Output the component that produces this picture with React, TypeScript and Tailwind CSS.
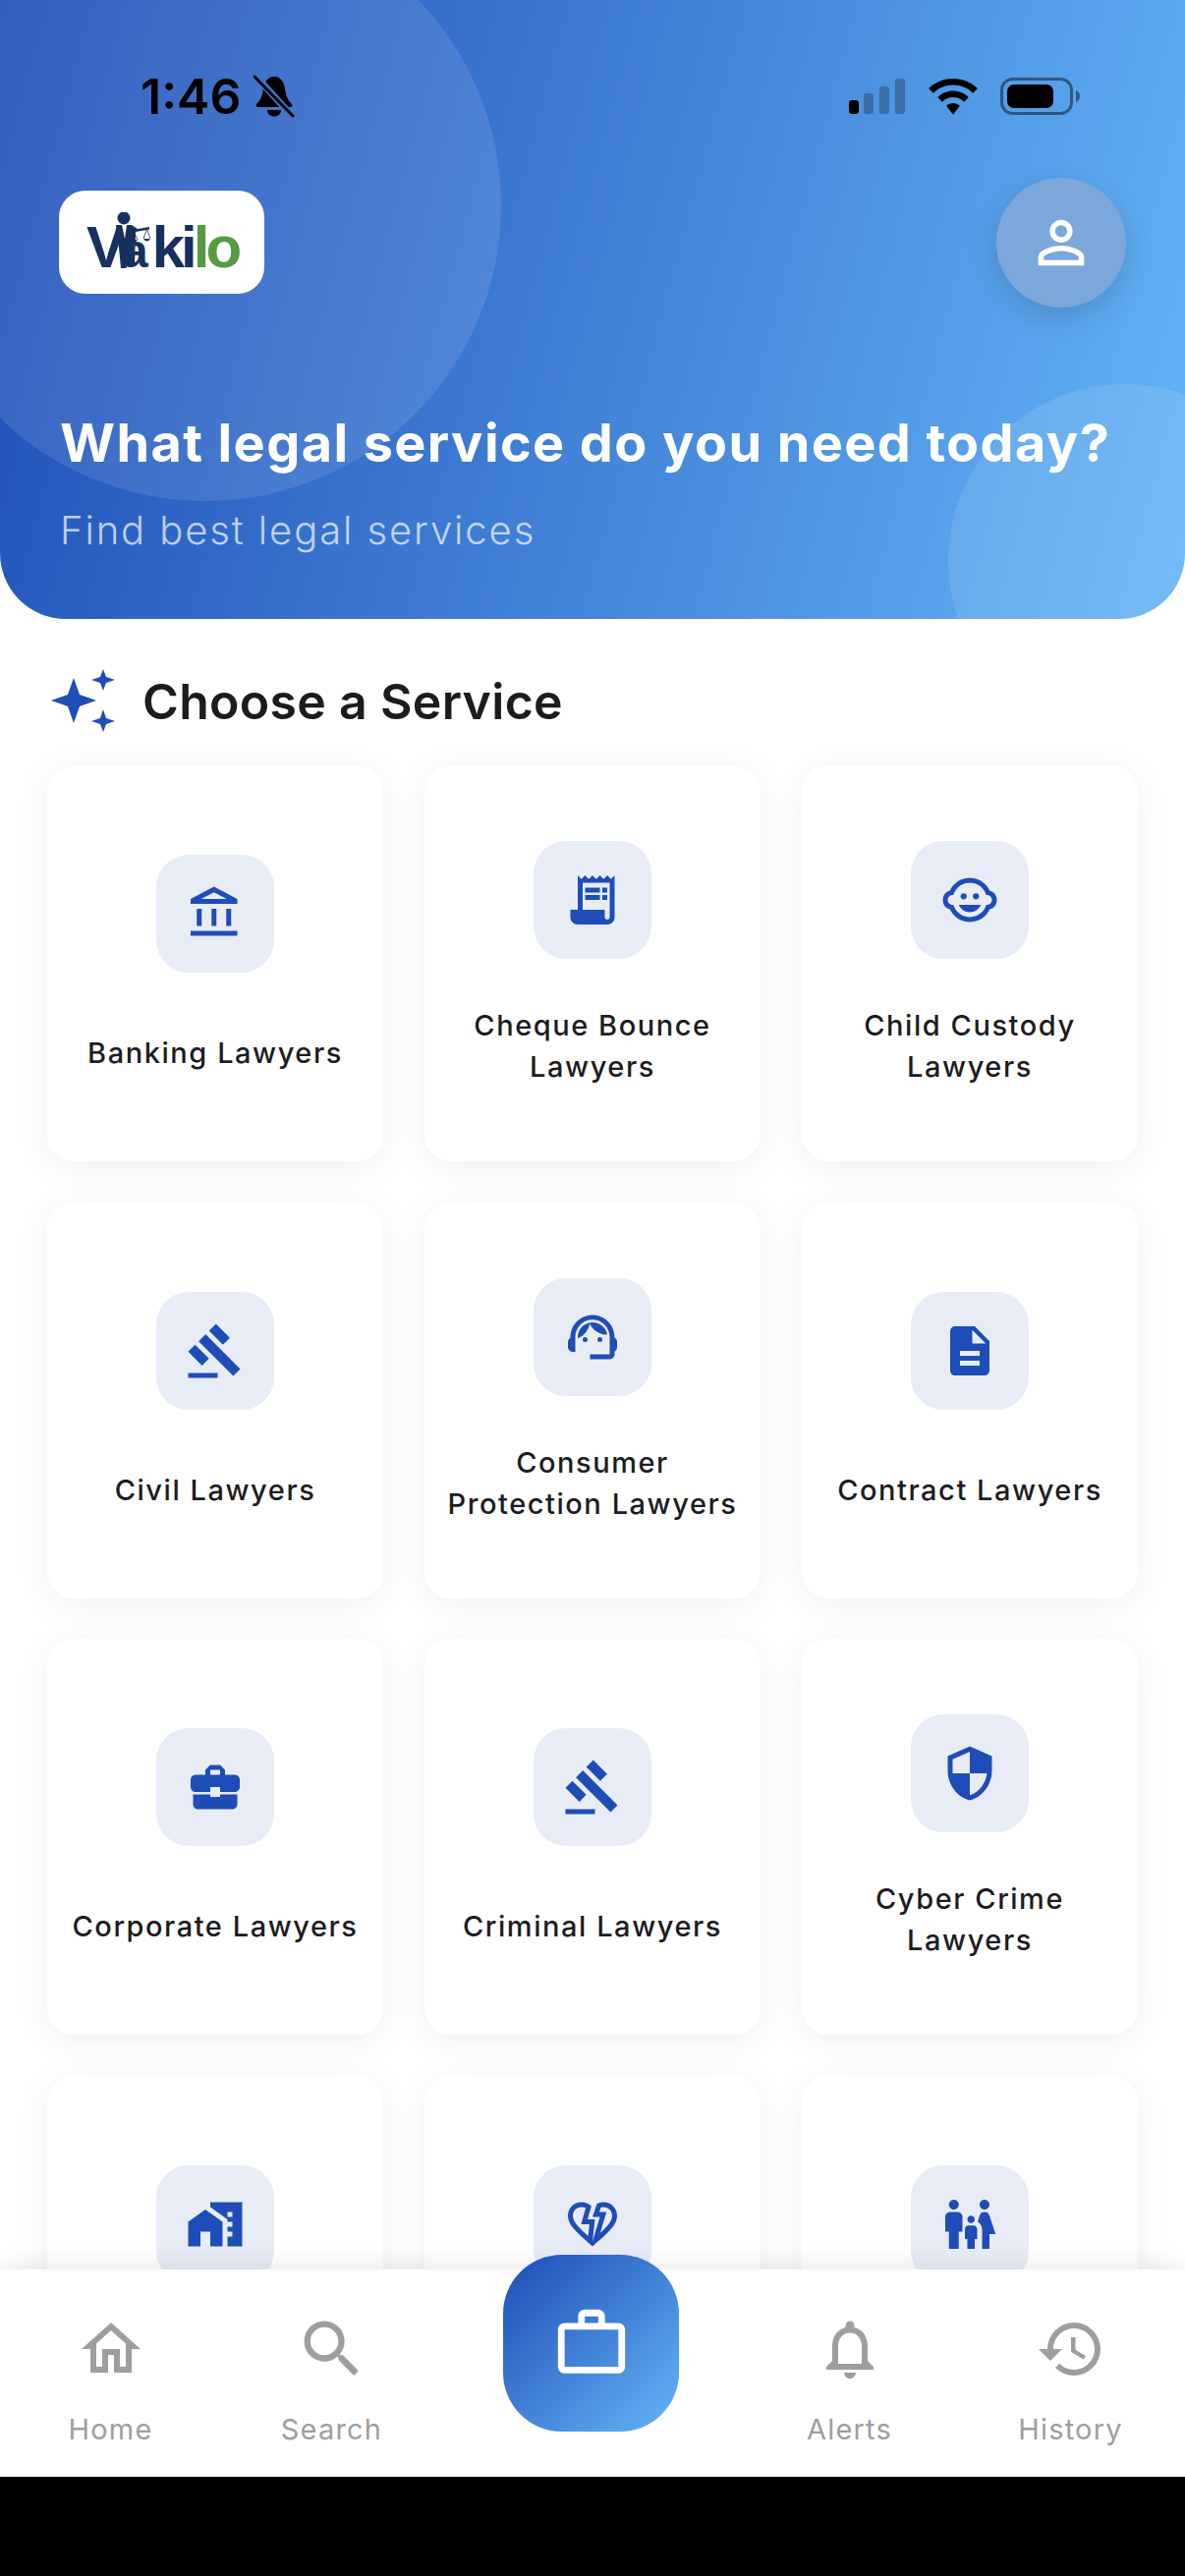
import React from 'react';
import type { IconType } from 'react-icons';
import {
  MdBusinessCenter,
  MdDescription,
  MdFamilyRestroom,
  MdGavel,
  MdHistory,
  MdHomeWork,
  MdOutlineAccountBalance,
  MdOutlineChildCare,
  MdOutlineHeartBroken,
  MdOutlineHome,
  MdOutlineNotifications,
  MdOutlineSupportAgent,
  MdPersonOutline,
  MdReceiptLong,
  MdSearch,
  MdSecurity,
  MdWorkOutline,
} from 'react-icons/md';

interface Service {
  label?: string;
  icon: IconType;
  twoLines?: boolean;
}

// last row sits behind the nav, its labels never show
const services: Service[] = [
  { label: 'Banking Lawyers', icon: MdOutlineAccountBalance },
  { label: 'Cheque Bounce Lawyers', icon: MdReceiptLong, twoLines: true },
  { label: 'Child Custody Lawyers', icon: MdOutlineChildCare, twoLines: true },
  { label: 'Civil Lawyers', icon: MdGavel },
  { label: 'Consumer Protection Lawyers', icon: MdOutlineSupportAgent, twoLines: true },
  { label: 'Contract Lawyers', icon: MdDescription },
  { label: 'Corporate Lawyers', icon: MdBusinessCenter },
  { label: 'Criminal Lawyers', icon: MdGavel },
  { label: 'Cyber Crime Lawyers', icon: MdSecurity, twoLines: true },
  { icon: MdHomeWork },
  { icon: MdOutlineHeartBroken },
  { icon: MdFamilyRestroom },
];

function BellOff() {
  return (
    <svg width="42" height="44" viewBox="0 0 42 44" className="ml-[13px]">
      <path d="M21 2C14 2 11 8 10 14C9 22 7 26 3 30C2 32 3 33 5 33H37C39 33 40 32 39 30C35 26 33 22 32 14C31 8 28 2 21 2Z" fill="#000" />
      <path d="M14 36H28C28 40 25 42.500 21 42.500C17 42.500 14 40 14 36Z" fill="#000" />
      <path d="M1 0L41 44" stroke="#3f74c9" strokeWidth="7" />
      <path d="M1 2L40 42" stroke="#000" strokeWidth="3" strokeLinecap="round" />
    </svg>
  );
}

function StatusIcons() {
  return (
    <div className="flex items-center">
      <svg width="57" height="36" viewBox="0 0 57 36" className="mr-[23px]">
        <rect x="0" y="22" width="10" height="14" rx="3" fill="#000" />
        <rect x="15" y="15" width="10" height="21" rx="3" fill="#000" opacity="0.25" />
        <rect x="31" y="8" width="10" height="28" rx="3" fill="#000" opacity="0.25" />
        <rect x="47" y="0" width="10" height="36" rx="3" fill="#000" opacity="0.25" />
      </svg>
      <svg width="52" height="37" viewBox="0 0 50 36" className="mr-[22px]">
        <path d="M25 0C15.500 0 7 3.700 0.800 9.800L5.300 14.400C10.400 9.400 17.300 6.400 25 6.400C32.700 6.400 39.600 9.400 44.700 14.400L49.200 9.800C43 3.700 34.500 0 25 0Z" fill="#000" />
        <path d="M25 12.200C19.100 12.200 13.700 14.500 9.700 18.500L14.200 23C17 20.200 20.800 18.600 25 18.600C29.200 18.600 33 20.200 35.800 23L40.300 18.500C36.300 14.500 30.900 12.200 25 12.200Z" fill="#000" />
        <path d="M25 24.400C22.400 24.400 20.100 25.400 18.400 27.100L25 35.800L31.600 27.100C29.900 25.400 27.600 24.400 25 24.400Z" fill="#000" />
      </svg>
      <svg width="82" height="38" viewBox="0 0 82 38">
        <rect x="1.500" y="1.500" width="71" height="35" rx="11" fill="none" stroke="#000" strokeOpacity="0.45" strokeWidth="3" />
        <rect x="7" y="7" width="47" height="24" rx="7" fill="#000" />
        <path d="M77 13C79.500 14 81 16.300 81 19C81 21.700 79.500 24 77 25Z" fill="#000" fillOpacity="0.45" />
      </svg>
    </div>
  );
}

function Logo() {
  return (
    <div className="relative flex h-[105px] w-[209px] items-end rounded-[27px] bg-white pb-[15px] pl-[28px]">
      <span className="font-['Liberation_Sans',sans-serif] text-[60px] leading-[56px] font-bold tracking-[-4px] text-[#16315f]">
        V<span className="text-[48px] tracking-[4px]">a</span>ki<span className="text-[#569a42]">lo</span>
      </span>
      {/* barrister holding the scales, over the V */}
      <svg width="48" height="60" viewBox="0 0 48 60" className="absolute top-[22px] left-[52px]">
        <circle cx="14" cy="6" r="6.500" fill="#16315f" />
        <path d="M6 13H22L28 17L40 15V17.500L26 20L25 54H18L16 57H11L9 36Z" fill="#16315f" />
        <path d="M12 13H17L15 27Z" fill="#fff" />
        <path d="M24.500 20L21 28M24.500 20L28 28M37.500 17L34 27M37.500 17L41 27" stroke="#16315f" strokeWidth="0.800" />
        <path d="M21 28H28Q24.500 33 21 28ZM34 27H41Q37.500 32 34 27Z" fill="#16315f" />
      </svg>
    </div>
  );
}

function Sparkle() {
  return (
    <svg width="70" height="70" viewBox="0 0 70 70" className="shrink-0">
      <path d="M25 11L31 28L48 34L31 40L25 57L19 40L2 34L19 28Z" fill="#1e4db7" />
      <path d="M55 2L58 10L67 13L58 16L55 24L52 16L43 13L52 10Z" fill="#1e4db7" />
      <path d="M55 43L58 52L67 55L58 58L55 66L52 58L43 55L52 52Z" fill="#1e4db7" />
    </svg>
  );
}

function ServiceCard({ service }: { service: Service }) {
  const Icon = service.icon;
  return (
    <div className="flex h-[403px] flex-col items-center justify-center rounded-[27px] bg-white px-[20px] pt-[2px] shadow-[0_6px_36px_rgba(0,0,0,0.065)]">
      <div className="flex h-[120px] w-[120px] shrink-0 items-center justify-center rounded-[33px] bg-[#e8ecf7]">
        <Icon className="text-[#1e4db7]" size={60} />
      </div>
      {service.label ? (
        <p
          className={`text-center text-[29px] leading-[42px] font-medium tracking-[1.55px] text-[#1c1c1e] ${
            service.twoLines ? 'mt-[47px]' : 'mt-[61px]'
          }`}
        >
          {service.label}
        </p>
      ) : (
        <div className="mt-[61px] h-[42px]" />
      )}
    </div>
  );
}

function NavItem({ icon: Icon, label, size = 72 }: { icon: IconType; label: string; size?: number }) {
  return (
    <div className="flex flex-col items-center">
      <div className="flex h-[72px] items-center justify-center">
        <Icon size={size} className="text-[#9e9e9e]" />
      </div>
      <span className="mt-[26px] text-[29px] leading-[40px] tracking-[1.2px] text-[#9e9e9e]">{label}</span>
    </div>
  );
}

export default function App() {
  return (
    <div className="flex h-[2622px] w-[1206px] flex-col overflow-hidden bg-white font-['Inter',sans-serif]">
      <header className="relative h-[630px] shrink-0 overflow-hidden rounded-b-[67px] bg-[linear-gradient(105deg,#1e4db7,#64b5f6)]">
        <div className="absolute -top-[92px] -left-[92px] h-[602px] w-[602px] rounded-full bg-white/10" />
        <div className="absolute top-[391px] -right-[119px] h-[360px] w-[360px] rounded-full bg-white/10" />
        <div className="relative flex h-full flex-col">
          <div className="mt-[73px] flex h-[50px] items-center justify-between pr-[106px] pl-[143px]">
            <div className="flex items-center">
              <span className="text-[50px] leading-[50px] font-semibold text-black">1:46</span>
              <BellOff />
            </div>
            <StatusIcons />
          </div>
          <div className="mt-[56px] flex items-center justify-between pr-[60px] pl-[60px]">
            <Logo />
            <div className="mt-[2px] flex h-[132px] w-[132px] items-center justify-center rounded-full bg-[#7ca7da] shadow-[0_10px_30px_rgba(0,0,0,0.14)]">
              <MdPersonOutline size={70} className="text-white" />
            </div>
          </div>
          <h1 className="mt-[106px] ml-[61px] text-[54px] leading-[64px] font-bold tracking-[1.4px] whitespace-nowrap text-white">
            What legal service do you need today?
          </h1>
          <p className="mt-[32px] ml-[61px] text-[40px] leading-[50px] font-light tracking-[1.9px] text-white/70">
            Find best legal services
          </p>
        </div>
      </header>

      <main className="min-h-0 flex-1 overflow-hidden px-[48px]">
        <div className="mt-[49px] ml-[2px] flex h-[70px] items-center">
          <Sparkle />
          <h2 className="ml-[25px] text-[50px] leading-[60px] font-semibold tracking-[0.3px] text-[#1c1c1e]">
            Choose a Service
          </h2>
        </div>
        <div className="mt-[30px] grid grid-cols-3 gap-x-[42px] gap-y-[41.5px]">
          {services.map((service, i) => (
            <ServiceCard key={i} service={service} />
          ))}
        </div>
      </main>

      <nav className="relative z-10 grid h-[211px] shrink-0 grid-cols-[225px_225px_302px_225px_225px] bg-white pt-[45px] shadow-[0_-4px_24px_rgba(0,0,0,0.09)]">
        <NavItem icon={MdOutlineHome} label="Home" />
        <NavItem icon={MdSearch} label="Search" size={76} />
        <div />
        <NavItem icon={MdOutlineNotifications} label="Alerts" />
        <NavItem icon={MdHistory} label="History" />
        <div className="absolute -top-[15px] left-[512px] flex h-[180px] w-[179px] items-center justify-center rounded-[60px] bg-[linear-gradient(135deg,#1e4db7,#64b5f6)]">
          <MdWorkOutline size={82} className="text-white" />
        </div>
      </nav>
      <div className="h-[101px] shrink-0 bg-black" />
    </div>
  );
}
